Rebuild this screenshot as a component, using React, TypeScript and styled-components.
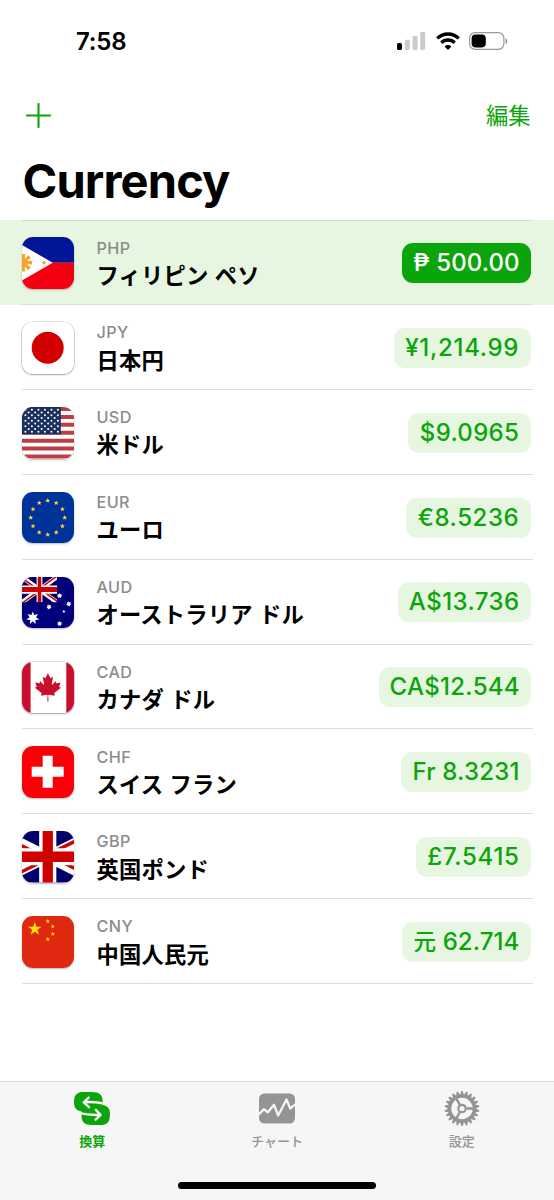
import React from "react";
import styled, { createGlobalStyle } from "styled-components";

const GREEN = "#0ba50b";
const PALE = "#e6f6e0";
const GRAY = "#8b8b8f";

const GlobalStyle = createGlobalStyle`
  * { box-sizing: border-box; }
  body {
    margin: 0;
    background: #fff;
    color: #000;
    font-family: Inter, "Noto Sans CJK JP", sans-serif;
  }
`;

const Screen = styled.div`
  display: flex;
  flex-direction: column;
  width: 554px;
  height: 1200px;
  overflow: hidden;
  background: #fff;
`;

const StatusBar = styled.header`
  display: flex;
  justify-content: space-between;
  align-items: center;
  height: 82px;
  padding: 0 46px 0 76px;
`;

const Clock = styled.time`
  font-size: 24px;
  font-weight: 600;
  letter-spacing: -0.2px;
`;

const StatusIcons = styled.div`
  display: flex;
  align-items: center;
  gap: 9.5px;
`;

const NavBar = styled.nav`
  display: flex;
  justify-content: space-between;
  align-items: center;
  height: 66px;
  padding: 0 23.5px 0 26px;
  color: ${GREEN};
`;

const PlainButton = styled.button`
  display: flex;
  padding: 0;
  border: 0;
  background: none;
  color: inherit;
  font: 400 22.3px/30px "Noto Sans CJK JP", sans-serif;
`;

const EditButton = styled(PlainButton)`
  padding-bottom: 3px;
`;

const Title = styled.h1`
  height: 72.4px;
  margin: 0;
  padding-left: 22.5px;
  font-size: 47px;
  font-weight: 700;
  line-height: 66px;
  letter-spacing: -0.85px;
`;

const List = styled.ul`
  flex: 1;
  margin: 0;
  padding: 0;
  list-style: none;
`;

const Row = styled.li<{ $active?: boolean }>`
  height: 84.85px;
  padding: 0 21.5px;
  background: ${(p) => (p.$active ? PALE : "transparent")};
`;

const RowInner = styled.div<{ $first?: boolean }>`
  display: flex;
  align-items: center;
  height: 100%;
  padding: 0.5px 1.5px 0 0.7px;
  box-shadow: inset 0 -1px #dedee0${(p) => (p.$first ? ", inset 0 1px #d3dccf" : "")};
`;

const FlagBox = styled.div<{ $outlined?: boolean }>`
  width: 51.5px;
  height: 51.5px;
  flex: none;
  border-radius: 11px;
  overflow: hidden;
  box-shadow: 0 1px 2px rgba(0, 0, 0, 0.28)${(p) => (p.$outlined ? ", 0 0 0 0.6px rgba(0,0,0,.22)" : "")};

  svg { display: block; }
`;

const Names = styled.div`
  display: flex;
  flex-direction: column;
  flex: 1;
  padding: 1.2px 0 0 22.8px;
`;

const Code = styled.span`
  font-size: 16.2px;
  font-weight: 500;
  line-height: 20px;
  letter-spacing: 0.4px;
  color: ${GRAY};
`;

const Name = styled.span`
  margin-top: 0.2px;
  font: 700 22.3px/32px "Noto Sans CJK JP", sans-serif;
  letter-spacing: 0.2px;
  word-spacing: 1px;
  white-space: pre;
`;

const Amount = styled.div<{ $width: number; $active?: boolean; $tracking?: number }>`
  display: flex;
  align-items: center;
  justify-content: center;
  width: ${(p) => p.$width}px;
  height: 40px;
  border-radius: 11px;
  background: ${(p) => (p.$active ? GREEN : PALE)};
  color: ${(p) => (p.$active ? "#fff" : GREEN)};
  font-size: 24px;
  font-weight: 550;
  line-height: 40px;
  letter-spacing: ${(p) => p.$tracking ?? 0.35}px;
  white-space: pre;
`;

const CjkSymbol = styled.span`
  font: 500 22.5px/1 "Noto Sans CJK JP", sans-serif;
`;

const TabBar = styled.footer`
  display: flex;
  flex-direction: column;
  align-items: center;
  height: 119px;
  border-top: 1px solid #dadada;
  background: #f6f6f6;
`;

const Tabs = styled.div`
  display: grid;
  grid-template-columns: repeat(3, 1fr);
  width: 100%;
  height: 99.7px;
`;

const Tab = styled.div<{ $active?: boolean }>`
  display: flex;
  flex-direction: column;
  align-items: center;
  padding-top: 9px;
  color: ${(p) => (p.$active ? GREEN : "#949494")};
  font: ${(p) => (p.$active ? 700 : 500)} 13px/20px "Noto Sans CJK JP", sans-serif;

  svg { display: block; margin-bottom: 5px; }
`;

const HomeIndicator = styled.div`
  width: 198px;
  height: 7px;
  border-radius: 4px;
  background: #000;
`;

function star(cx: number, cy: number, r: number, points = 5, inner = 0.382) {
  return Array.from({ length: points * 2 }, (_, i) => {
    const a = (Math.PI * i) / points - Math.PI / 2;
    const d = i % 2 ? r * inner : r;
    return `${(cx + d * Math.cos(a)).toFixed(2)},${(cy + d * Math.sin(a)).toFixed(2)}`;
  }).join(" ");
}

const Flag = ({ children }: { children: React.ReactNode }) => (
  <svg width="51.5" height="51.5" viewBox="0 0 51.5 51.5">{children}</svg>
);

const UnionJack = ({ id }: { id: string }) => (
  <>
    <clipPath id={id}>
      <path d="M30,15h30v15zv15h-30zh-30v-15zv-15h30z" />
    </clipPath>
    <path d="M0 0h60v30H0z" fill="#00006b" />
    <path d="M0,0L60,30M60,0L0,30" stroke="#fff" strokeWidth="6" />
    <path d="M0,0L60,30M60,0L0,30" clipPath={`url(#${id})`} stroke="#cf0000" strokeWidth="4" />
    <path d="M30,0v30M0,15h60" stroke="#fff" strokeWidth="10" />
    <path d="M30,0v30M0,15h60" stroke="#cf0000" strokeWidth="6" />
  </>
);

const flags: Record<string, React.ReactNode> = {
  PHP: (
    <Flag>
      <path d="M0 0h52v25.7H0z" fill="#001597" />
      <path d="M0 25.7h52V52H0z" fill="#f50012" />
      <path d="M0 8L30.7 25.7 0 43.4z" fill="#fff" />
      <g fill="#f3a62b">
        <circle cx="1.3" cy="25.7" r="4.6" />
        {Array.from({ length: 8 }, (_, i) => (
          <path
            key={i}
            d="M0 -1.1L8.8 -1.9V1.9L0 1.1Z"
            transform={`translate(1.3 25.7) rotate(${i * 45})`}
          />
        ))}
        <polygon points={star(22, 25.7, 2.6, 5, 0.5)} />
      </g>
    </Flag>
  ),
  JPY: (
    <Flag>
      <path d="M0 0h52v52H0z" fill="#fff" />
      <circle cx="25.7" cy="25.7" r="16" fill="#d30000" />
    </Flag>
  ),
  USD: (
    <Flag>
      <path d="M0 0h52v52H0z" fill="#fff" />
      {[0, 2, 4, 6, 8, 10, 12].map((i) => (
        <path key={i} d={`M0 ${i * 3.96}h52v3.96H0z`} fill="#bd3d44" />
      ))}
      <path d="M0 0h38.8v27.3H0z" fill="#192f5d" />
      {Array.from({ length: 9 }, (_, r) =>
        Array.from({ length: r % 2 ? 5 : 6 }, (_, c) => (
          <circle key={`${r}-${c}`} cx={3.4 + c * 6.5 + (r % 2 ? 3.25 : 0)} cy={2.7 + r * 2.75} r="1.05" fill="#fff" />
        ))
      )}
    </Flag>
  ),
  EUR: (
    <Flag>
      <path d="M0 0h52v52H0z" fill="#003399" />
      {Array.from({ length: 12 }, (_, i) => (
        <polygon
          key={i}
          points={star(25.7 + 17 * Math.sin((i * Math.PI) / 6), 25.7 - 17 * Math.cos((i * Math.PI) / 6), 2.6, 5, 0.42)}
          fill="#ffd633"
        />
      ))}
    </Flag>
  ),
  AUD: (
    <Flag>
      <path d="M0 0h52v52H0z" fill="#00007d" />
      <svg width="35" height="25.2" viewBox="0 0 60 30" preserveAspectRatio="none">
        <UnionJack id="canton" />
      </svg>
      <g fill="#fff">
        <polygon points={star(10.8, 41, 6.6, 7, 0.5)} />
        <polygon points={star(37.6, 18.7, 2.7, 7, 0.6)} />
        <polygon points={star(46.8, 27, 2.7, 7, 0.6)} />
        <polygon points={star(27, 30, 2.7, 7, 0.6)} />
        <polygon points={star(41.8, 34.5, 1.6, 5, 0.5)} />
        <polygon points={star(37.6, 46.6, 2.7, 7, 0.6)} />
      </g>
    </Flag>
  ),
  CAD: (
    <Flag>
      <path d="M0 0h52v52H0z" fill="#fff" />
      <path d="M0 0h8.6v52H0zM44.3 0H52v52h-7.7z" fill="#c8102e" />
      <path
        transform="translate(25.9 25.3) scale(.007)"
        fill="#c8102e"
        d="m-90 2030 45-863a95 95 0 0 0-111-98l-859 151 116-320a65 65 0 0 0-20-73l-941-762 212-99a65 65 0 0 0 34-79l-186-572 542 115a65 65 0 0 0 73-38l105-247 423 454a65 65 0 0 0 111-57l-204-1052 327 189a65 65 0 0 0 91-27l332-652 332 652a65 65 0 0 0 91 27l327-189-204 1052a65 65 0 0 0 111 57l423-454 105 247a65 65 0 0 0 73 38l542-115-186 572a65 65 0 0 0 34 79l212 99-941 762a65 65 0 0 0-20 73l116 320-859-151a95 95 0 0 0-111 98l45 863z"
      />
    </Flag>
  ),
  CHF: (
    <Flag>
      <path d="M0 0h52v52H0z" fill="#fb0007" />
      <path d="M25.7 9.7v32M9.7 25.7h32" stroke="#fff" strokeWidth="10" />
    </Flag>
  ),
  GBP: (
    <svg width="51.5" height="51.5" viewBox="15 0 30 30">
      <UnionJack id="jack" />
    </svg>
  ),
  CNY: (
    <Flag>
      <path d="M0 0h52v52H0z" fill="#de2910" />
      <g fill="#ffde00">
        <polygon points={star(12.8, 13, 7.2)} />
        <polygon points={star(25.8, 5.3, 2.5)} />
        <polygon points={star(30.8, 10.4, 2.5)} />
        <polygon points={star(30.8, 17.9, 2.5)} />
        <polygon points={star(25.8, 23.2, 2.5)} />
      </g>
    </Flag>
  ),
};

type Currency = {
  code: string;
  name: string;
  amount: React.ReactNode;
  width: number;
  tracking?: number;
  active?: boolean;
};

const currencies: Currency[] = [
  { code: "PHP", name: "フィリピン ペソ", amount: "₱ 500.00", width: 129, tracking: 0.1, active: true },
  { code: "JPY", name: "日本円", amount: "¥1,214.99", width: 137.5, tracking: 0.7 },
  { code: "USD", name: "米ドル", amount: "$9.0965", width: 123, tracking: 0.3 },
  { code: "EUR", name: "ユーロ", amount: "€8.5236", width: 125, tracking: 0.6 },
  { code: "AUD", name: "オーストラリア ドル", amount: "A$13.736", width: 133.5, tracking: 0.45 },
  { code: "CAD", name: "カナダ ドル", amount: "CA$12.544", width: 152.5, tracking: 0.3 },
  { code: "CHF", name: "スイス フラン", amount: "Fr 8.3231", width: 130, tracking: 0.2 },
  { code: "GBP", name: "英国ポンド", amount: "£7.5415", width: 115, tracking: 0.7 },
  { code: "CNY", name: "中国人民元", amount: <><CjkSymbol>元</CjkSymbol> 62.714</>, width: 129, tracking: 0.1 },
];

const SignalIcon = () => (
  <svg width="29" height="18" viewBox="0 0 29 18">
    <rect x="0" y="11" width="5" height="7" rx="1.6" />
    <g fill="#cbcbcb">
      <rect x="7.8" y="7.7" width="5" height="10.3" rx="1.4" />
      <rect x="15.6" y="4" width="5" height="14" rx="1.4" />
      <rect x="23.2" y="0" width="5" height="18" rx="1.4" />
    </g>
  </svg>
);

const WifiIcon = () => (
  <svg width="24" height="18" viewBox="0 0 24 18" fill="none" stroke="#000" strokeWidth="3.3">
    <path d="M1.3 6.4a15.2 15.2 0 0 1 21.4 0" />
    <path d="M5.3 10.7a9.6 9.6 0 0 1 13.4 0" />
    <path d="M12 18l-3.4-3.6a4.8 4.8 0 0 1 6.8 0z" fill="#000" stroke="none" />
  </svg>
);

const BatteryIcon = () => (
  <svg width="39" height="18" viewBox="0 0 39 18">
    <rect x="0.6" y="0.6" width="34.3" height="16.8" rx="5.6" fill="none" stroke="#999" strokeWidth="1.2" />
    <rect x="2.6" y="2.6" width="14.2" height="12.8" rx="3.8" />
    <path d="M36.6 6.2c2.3.8 2.3 4.8 0 5.6z" fill="#888" />
  </svg>
);

const PlusIcon = () => (
  <svg width="25" height="25" viewBox="0 0 25 25">
    <path d="M12.5 1v23M1 12.5h23" stroke={GREEN} strokeWidth="2.1" strokeLinecap="round" />
  </svg>
);

const ConvertIcon = () => (
  <svg width="36" height="35" viewBox="0 -1 36 35" fill="none">
    <path
      d="M0 10C0 2.500 3 0 10 0H18C25.500 0 28.500 3 28.700 9V13C33.500 14 36 16.500 36 22C36 30.500 33 33 26 33H18C10.500 33 7.700 30 7.500 24V19.500C2.500 18.500 0 16 0 10Z"
      fill="currentColor"
    />
    <g stroke="#f6f6f6" strokeWidth="2.4" strokeLinecap="round" strokeLinejoin="round">
      <path d="M14.600 5.600L9.800 10.400L15 15.200" />
      <path d="M10.500 10.200C17 9.600 24 10 30.500 11.700" />
      <path d="M21.800 17.800L26.600 22.800L21.600 27.700" />
      <path d="M5.500 21.200C12 22.800 19 23.200 26 22.900" />
    </g>
  </svg>
);

const ChartIcon = () => (
  <svg width="36" height="35" viewBox="0 -2.5 36 35" fill="none">
    <rect width="36" height="30" rx="5.5" fill="currentColor" />
    <path
      d="M-1 21.500L5 15.700L8.800 18.800L15 11.300L19.200 22L27.500 6L31.200 15L37 10.300"
      stroke="#f6f6f6"
      strokeWidth="2.3"
      strokeLinejoin="round"
    />
  </svg>
);

const GearIcon = () => (
  <svg width="36" height="35" viewBox="-18 -17.5 36 35" fill="none" stroke="currentColor">
    {Array.from({ length: 22 }, (_, i) => (
      <path
        key={i}
        d="M-1.900 -13.500L-.7 -17.400H.7L1.900 -13.500Z"
        fill="currentColor"
        stroke="none"
        transform={`rotate(${(i * 360) / 22})`}
      />
    ))}
    <circle r="12.500" strokeWidth="3.600" />
    <circle r="3.700" strokeWidth="2.200" />
    <path d="M4.500 0H12M-2.250 -3.900L-6 -10.400M-2.250 3.900L-6 10.400" strokeWidth="2.300" />
  </svg>
);

export default function App() {
  return (
    <Screen>
      <GlobalStyle />
      <StatusBar>
        <Clock>7:58</Clock>
        <StatusIcons>
          <SignalIcon />
          <WifiIcon />
          <BatteryIcon />
        </StatusIcons>
      </StatusBar>
      <NavBar>
        <PlainButton aria-label="追加"><PlusIcon /></PlainButton>
        <EditButton>編集</EditButton>
      </NavBar>
      <Title>Currency</Title>
      <List>
        {currencies.map((c, i) => (
          <Row key={c.code} $active={c.active}>
            <RowInner $first={i === 0}>
              <FlagBox $outlined={c.code === "JPY" || c.code === "CAD"}>{flags[c.code]}</FlagBox>
              <Names>
                <Code>{c.code}</Code>
                <Name>{c.name}</Name>
              </Names>
              <Amount $width={c.width} $active={c.active} $tracking={c.tracking}>
                <span>{c.amount}</span>
              </Amount>
            </RowInner>
          </Row>
        ))}
      </List>
      <TabBar>
        <Tabs>
          <Tab $active><ConvertIcon />換算</Tab>
          <Tab><ChartIcon />チャート</Tab>
          <Tab><GearIcon />設定</Tab>
        </Tabs>
        <HomeIndicator />
      </TabBar>
    </Screen>
  );
}
